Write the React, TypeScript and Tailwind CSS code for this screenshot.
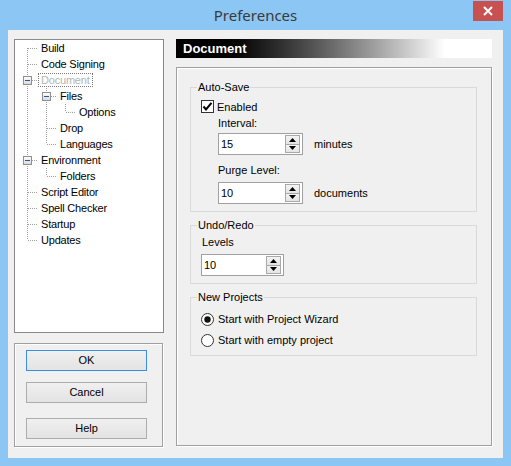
import React from "react";

type Row = { label: string; level: number; first?: boolean; last?: boolean; box?: boolean; cont?: number[]; focus?: boolean };

const rows: Row[] = [
  { label: "Build", level: 0, first: true },
  { label: "Code Signing", level: 0 },
  { label: "Document", level: 0, box: true, focus: true },
  { label: "Files", level: 1, box: true, cont: [0] },
  { label: "Options", level: 2, last: true, cont: [0, 1] },
  { label: "Drop", level: 1, cont: [0] },
  { label: "Languages", level: 1, last: true, cont: [0] },
  { label: "Environment", level: 0, box: true },
  { label: "Folders", level: 1, last: true, cont: [0] },
  { label: "Script Editor", level: 0 },
  { label: "Spell Checker", level: 0 },
  { label: "Startup", level: 0 },
  { label: "Updates", level: 0, last: true },
];

const LINE = "#a0a0a0";

function Gutter({ r }: { r: Row }) {
  const w = 23 + 19 * r.level;
  const xl = 12 + 19 * r.level;
  return (
    <svg width={w} height={16} className="shrink-0 block">
      <defs>
        <linearGradient id="bx" x1="0" y1="0" x2="0" y2="1">
          <stop offset="0" stopColor="#ffffff" />
          <stop offset="1" stopColor="#d8d8d8" />
        </linearGradient>
      </defs>
      {(r.cont || []).map((l) => (
        <line key={l} x1={12 + 19 * l + 0.5} y1={0} x2={12 + 19 * l + 0.5} y2={16} stroke={LINE} strokeDasharray="1 1" />
      ))}
      {!r.first && <line x1={xl + 0.5} y1={0} x2={xl + 0.5} y2={8} stroke={LINE} strokeDasharray="1 1" />}
      {!r.last && <line x1={xl + 0.5} y1={8} x2={xl + 0.5} y2={16} stroke={LINE} strokeDasharray="1 1" />}
      <line x1={xl + 1} y1={8.5} x2={xl + 11} y2={8.5} stroke={LINE} strokeDasharray="1 1" />
      {r.box && (
        <g>
          <rect x={xl - 4 + 0.5} y={4.5} width={8} height={8} fill="url(#bx)" stroke="#8f8f8f" />
          <line x1={xl - 2} y1={8.5} x2={xl + 3} y2={8.5} stroke="#2b56a8" />
        </g>
      )}
    </svg>
  );
}

function Spin({ value, width }: { value: string; width: string }) {
  return (
    <div className={`flex h-[22px] ${width} border border-[#a0a0a0] bg-white`}>
      <div className="flex-1 pl-[2px] pt-[3px] text-[11px] leading-[14px] text-black">{value}</div>
      <div className="mr-[2px] my-[1px] flex w-[15px] flex-col gap-0">
        <div className="flex h-[10px] items-center justify-center border border-[#a8a8a8] bg-gradient-to-b from-[#f4f4f4] to-[#e4e4e4]">
          <svg width="7" height="4" viewBox="0 0 7 4"><path d="M3.5 0 L7 4 L0 4 Z" fill="#000" /></svg>
        </div>
        <div className="flex h-[9px] items-center justify-center border border-t-0 border-[#a8a8a8] bg-gradient-to-b from-[#f4f4f4] to-[#e4e4e4]">
          <svg width="7" height="4" viewBox="0 0 7 4"><path d="M0 0 L7 0 L3.5 4 Z" fill="#000" /></svg>
        </div>
      </div>
    </div>
  );
}

function Group({ title, children, className }: { title: string; children: React.ReactNode; className?: string }) {
  return (
    <div className={`relative border border-[#d9d9d9] ${className || ""}`}>
      <span className="absolute -top-[8px] left-[6px] bg-[#f0f0f0] px-[1px] text-[11px] leading-[14px] text-black">{title}</span>
      {children}
    </div>
  );
}

function Radio({ checked, label }: { checked?: boolean; label: string }) {
  return (
    <div className="flex h-[16px] items-center gap-[4px]">
      <svg width="13" height="13" viewBox="0 0 13 13" className="shrink-0">
        <circle cx="6.5" cy="6.5" r="6" fill="#fff" stroke="#333" />
        {checked && <circle cx="6.5" cy="6.5" r="3.2" fill="#111" />}
      </svg>
      <span className="text-[11px] leading-[14px] text-black">{label}</span>
    </div>
  );
}

export default function App() {
  const font = { fontFamily: '"Liberation Sans", Arial, sans-serif' };
  return (
    <div className="flex h-[466px] w-[511px] flex-col bg-[#8bc6f5]" style={font}>
      <div className="relative flex h-[30px] items-center justify-center">
        <span className="text-[15px] text-[#3a3a3a]" style={{ fontFamily: '"Noto Sans", "Open Sans", sans-serif' }}>Preferences</span>
        <div className="absolute right-[8px] top-[1px] flex h-[20px] w-[30px] items-center justify-center bg-[#c75050]">
          <svg width="10" height="10" viewBox="0 0 10 10"><path d="M1 1 L9 9 M9 1 L1 9" stroke="#fff" strokeWidth="2" /></svg>
        </div>
      </div>
      <div className="mx-[8px] flex h-[428px] w-[495px] gap-[12px] bg-[#f0f0f0] pl-[6px] pt-[9px]">
        {/* left column */}
        <div className="flex w-[150px] flex-col gap-[10px]">
          <div className="h-[294px] border border-[#8a8a8a] bg-white">
            {rows.map((r) => (
              <div key={r.label} className="flex h-[16px] items-center">
                <Gutter r={r} />
                <span
                  className={`px-[2px] text-[11px] leading-[12px] tracking-[-0.2px] border ${
                    r.focus ? "border-dotted border-[#7a7a7a] text-[#b4b4b4]" : "border-transparent text-black"
                  }`}
                >
                  {r.label}
                </span>
              </div>
            ))}
          </div>
          <div className="flex w-[149px] flex-col border border-[#a0a0a0] pb-[7px] pl-[11px] pt-[6px] shadow-[1px_1px_0_#fff,inset_1px_1px_0_#fff]">
            <button className="h-[21px] w-[121px] border border-[#3c8ee5] bg-gradient-to-b from-[#f0f0f0] to-[#e3e3e3] text-[11px] text-black">OK</button>
            <button className="mt-[11px] h-[21px] w-[121px] border border-[#acacac] bg-gradient-to-b from-[#f0f0f0] to-[#e3e3e3] text-[11px] text-black">Cancel</button>
            <button className="mt-[15px] h-[21px] w-[121px] border border-[#acacac] bg-gradient-to-b from-[#f0f0f0] to-[#e3e3e3] text-[11px] text-black">Help</button>
          </div>
        </div>
        {/* right column */}
        <div className="flex w-[316px] flex-col">
          <div className="flex h-[19px] items-center bg-gradient-to-r from-black from-[10%] to-white to-[85%] pl-[7px]">
            <span className="text-[13px] font-bold text-white">Document</span>
          </div>
          <div className="mt-[9px] h-[379px] border border-[#a0a0a0] pl-[13px] pr-[14px] shadow-[1px_1px_0_#fff,inset_1px_1px_0_#fff]">
            <Group title="Auto-Save" className="mt-[19px] pb-[7px] pl-[10px] pt-[12px]">
              <div className="flex h-[13px] items-center gap-[3px]">
                <svg width="13" height="13" viewBox="0 0 13 13" className="shrink-0">
                  <rect x="0.5" y="0.5" width="12" height="12" fill="#fff" stroke="#333" />
                  <path d="M2.5 6.5 L5 9.5 L10.5 2.8" stroke="#000" strokeWidth="2" fill="none" />
                </svg>
                <span className="text-[11px] leading-[14px] text-black">Enabled</span>
              </div>
              <div className="pl-[17px]">
                <div className="mt-[2px] h-[16px] text-[11px] leading-[16px] text-black">Interval:</div>
                <div className="mt-[2px] flex items-center gap-[11px]">
                  <Spin value="15" width="w-[85px]" />
                  <span className="text-[11px] leading-[14px] text-black">minutes</span>
                </div>
                <div className="mt-[7px] h-[16px] text-[11px] leading-[16px] text-black">Purge Level:</div>
                <div className="mt-[4px] flex items-center gap-[11px]">
                  <Spin value="10" width="w-[85px]" />
                  <span className="text-[11px] leading-[14px] text-black">documents</span>
                </div>
              </div>
            </Group>
            <Group title="Undo/Redo" className="mt-[13px] pb-[7px] pl-[10px] pt-[8px]">
              <div className="h-[16px] pl-[1px] text-[11px] leading-[16px] text-black">Levels</div>
              <div className="mt-[4px]">
                <Spin value="10" width="w-[83px]" />
              </div>
            </Group>
            <Group title="New Projects" className="mt-[13px] pb-[7px] pl-[10px] pt-[13px]">
              <Radio checked label="Start with Project Wizard" />
              <div className="mt-[5px]">
                <Radio label="Start with empty project" />
              </div>
            </Group>
          </div>
        </div>
      </div>
    </div>
  );
}
